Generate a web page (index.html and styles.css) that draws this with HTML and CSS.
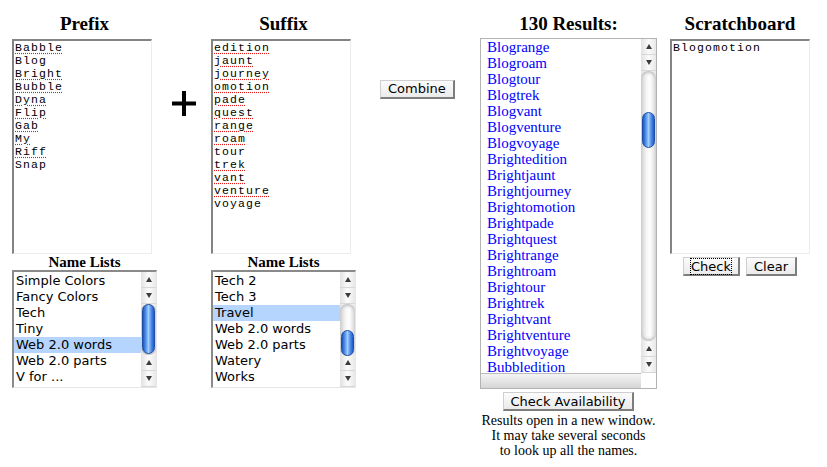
FILE: index.html
```html
<!DOCTYPE html>
<html>
  <head>
    <meta charset="UTF-8">
    <title>Name Combiner</title>
    <link rel="stylesheet" href="styles.css">
  </head>
  <body>
    <div class="page">
      <div class="list-col">
        <h2 class="heading">Prefix</h2>
        <div class="textbox">
          <div><span class="typo">Babble</span></div>
          <div>Blog</div>
          <div><span class="typo">Bright</span></div>
          <div><span class="typo">Bubble</span></div>
          <div><span class="typo">Dyna</span></div>
          <div><span class="typo">Flip</span></div>
          <div><span class="typo">Gab</span></div>
          <div><span class="typo">My</span></div>
          <div><span class="typo">Riff</span></div>
          <div>Snap</div>
        </div>
        <h3 class="subheading">Name Lists</h3>
        <div class="listbox">
          <ul class="options">
            <li>Simple Colors</li>
            <li>Fancy Colors</li>
            <li>Tech</li>
            <li>Tiny</li>
            <li class="selected">Web 2.0 words</li>
            <li>Web 2.0 parts</li>
            <li>V for ...</li>
          </ul>
          <div class="vbar">
            <span class="arrow up"></span>
            <span class="arrow down"></span>
            <div class="track"><div class="thumb thumb-prefix"></div></div>
            <span class="arrow up"></span>
            <span class="arrow down"></span>
          </div>
        </div>
      </div>

      <div class="plus-col">
        <svg width="24" height="25" viewBox="0 0 24 25">
          <rect x="10" y="0" width="4" height="25" fill="#000"/>
          <rect x="0" y="10.5" width="24" height="4" fill="#000"/>
        </svg>
      </div>

      <div class="list-col">
        <h2 class="heading">Suffix</h2>
        <div class="textbox">
          <div><span class="typo">edition</span></div>
          <div><span class="typo">jaunt</span></div>
          <div><span class="typo">journey</span></div>
          <div><span class="typo">omotion</span></div>
          <div><span class="typo">pade</span></div>
          <div><span class="typo">quest</span></div>
          <div><span class="typo">range</span></div>
          <div><span class="typo">roam</span></div>
          <div>tour</div>
          <div><span class="typo">trek</span></div>
          <div><span class="typo">vant</span></div>
          <div><span class="typo">venture</span></div>
          <div>voyage</div>
        </div>
        <h3 class="subheading">Name Lists</h3>
        <div class="listbox">
          <ul class="options">
            <li>Tech 2</li>
            <li>Tech 3</li>
            <li class="selected">Travel</li>
            <li>Web 2.0 words</li>
            <li>Web 2.0 parts</li>
            <li>Watery</li>
            <li>Works</li>
          </ul>
          <div class="vbar">
            <span class="arrow up"></span>
            <span class="arrow down"></span>
            <div class="track"><div class="thumb thumb-suffix"></div></div>
            <span class="arrow up"></span>
            <span class="arrow down"></span>
          </div>
        </div>
      </div>

      <div class="combine-col">
        <button class="btn" type="button">Combine</button>
      </div>

      <div class="results-col">
        <h2 class="heading results-heading">130 Results:</h2>
        <div class="results">
          <ul class="result-items">
            <li>Blogrange</li>
            <li>Blogroam</li>
            <li>Blogtour</li>
            <li>Blogtrek</li>
            <li>Blogvant</li>
            <li>Blogventure</li>
            <li>Blogvoyage</li>
            <li>Brightedition</li>
            <li>Brightjaunt</li>
            <li>Brightjourney</li>
            <li>Brightomotion</li>
            <li>Brightpade</li>
            <li>Brightquest</li>
            <li>Brightrange</li>
            <li>Brightroam</li>
            <li>Brightour</li>
            <li>Brightrek</li>
            <li>Brightvant</li>
            <li>Brightventure</li>
            <li>Brightvoyage</li>
            <li>Bubbledition</li>
          </ul>
          <div class="vbar">
            <span class="arrow up"></span>
            <span class="arrow down"></span>
            <div class="track"><div class="thumb thumb-results"></div></div>
            <span class="arrow up"></span>
            <span class="arrow down"></span>
          </div>
          <div class="hbar"></div>
          <div class="corner"></div>
        </div>
        <button class="btn avail" type="button">Check Availability</button>
        <p class="note">Results open in a new window.<br>It may take several seconds<br>to look up all the names.</p>
      </div>

      <div class="scratch-col">
        <h2 class="heading">Scratchboard</h2>
        <div class="textbox">
          <div>Blogomotion</div>
        </div>
        <div class="scratch-buttons">
          <button class="btn" type="button"><span class="focus">Check</span></button>
          <button class="btn" type="button">Clear</button>
        </div>
      </div>
    </div>
  </body>
</html>
```

FILE: styles.css
```css
body {
  margin: 0;
  background-color: #fff;
  color: #000;
  font-family: "Liberation Serif", serif;
}

.page {
  display: flex;
  align-items: flex-start;
  padding: 13px 0 0 12px;
}

.heading {
  margin: 0 0 4px;
  font-size: 19px;
  line-height: 22px;
  font-weight: bold;
  text-align: center;
}

.subheading {
  margin: 0;
  font-size: 15px;
  line-height: 16px;
  font-weight: bold;
  text-align: center;
}

/* columns */

.list-col {
  width: 145px;
  display: flex;
  flex-direction: column;
}

.plus-col {
  width: 54px;
  display: flex;
  justify-content: center;
  padding-top: 78px;
}

.combine-col {
  width: 124px;
  box-sizing: border-box;
  padding: 66px 0 0 24px;
}

.results-col {
  width: 177px;
  display: flex;
  flex-direction: column;
  align-items: center;
}

.scratch-col {
  width: 140px;
  margin-left: 13px;
  display: flex;
  flex-direction: column;
  align-items: center;
}

/* text areas */

.textbox {
  box-sizing: border-box;
  width: 140px;
  height: 215px;
  padding: 0 0 0 1px;
  border-style: solid;
  border-width: 2px 1px 1px 2px;
  border-color: #848484 #ececec #ececec #848484;
  font: 11.5px/13px "Liberation Mono", monospace;
  letter-spacing: 1.1px;
}

.typo {
  text-decoration: underline dotted #e41b1b;
  text-underline-offset: 2px;
}

/* list boxes */

.listbox {
  box-sizing: border-box;
  width: 145px;
  height: 118px;
  display: flex;
  border-style: solid;
  border-width: 2px 1px 1px 2px;
  border-color: #8a8a8a #e6e6e6 #e6e6e6 #8a8a8a;
}

.options {
  flex: 1;
  list-style: none;
  margin: 0;
  padding: 1px 0 0;
  overflow: hidden;
  font: 13px/16px "DejaVu Sans", sans-serif;
}

.options li {
  padding-left: 2px;
  white-space: nowrap;
}

.options .selected {
  background-color: #b5d5ff;
}

/* scroll bars */

.vbar {
  width: 15px;
  display: flex;
  flex-direction: column;
  background: linear-gradient(to right, #e2e2e2, #fbfbfb 50%, #e8e8e8);
}

.arrow {
  height: 16px;
  box-sizing: border-box;
  display: flex;
  align-items: center;
  justify-content: center;
  border-bottom: 1px solid #d8d8d8;
}

.arrow::after {
  content: "";
  border-left: 3px solid transparent;
  border-right: 3px solid transparent;
}

.arrow.up::after {
  border-bottom: 5px solid #3c3c3c;
}

.arrow.down::after {
  border-top: 5px solid #3c3c3c;
}

.track {
  flex: 1;
  display: flex;
  flex-direction: column;
  border-radius: 7px;
  background: linear-gradient(to right, #cfcfcf, #f4f4f4 35%, #ffffff 60%, #d6d6d6);
  box-shadow: inset 0 3px 3px -1px #c2c2c2, inset 0 -3px 3px -1px #c2c2c2;
}

.thumb {
  margin: 0 1px;
  border: 1px solid #1f4ea6;
  border-radius: 7px;
  background: linear-gradient(to right, #1b55c4, #5c9cef 30%, #a3cdfb 50%, #4f8ce8 75%, #1c58cf);
}

.thumb-prefix {
  height: 48px;
}

.thumb-suffix {
  height: 24px;
  margin-top: 26px;
}

.thumb-results {
  height: 34px;
  margin-top: 41px;
}

/* results */

.results-heading {
  margin-bottom: 3px;
}

.results {
  box-sizing: border-box;
  width: 177px;
  height: 351px;
  border: 1px solid #b4b4b4;
  display: grid;
  grid-template-columns: 1fr 15px;
  grid-template-rows: 1fr 15px;
}

.result-items {
  list-style: none;
  margin: 0;
  padding: 0 0 0 6px;
  overflow: hidden;
  font: 15px/16px "Liberation Serif", serif;
  color: #0000ff;
}

.hbar {
  border-top: 1px solid #bcbcbc;
  background: linear-gradient(#f4f4f4, #d6d6d6);
}

.corner {
  background-color: #fff;
}

.note {
  margin: 2px 0 0;
  font-size: 14px;
  line-height: 15px;
  text-align: center;
}

/* buttons */

.btn {
  box-sizing: border-box;
  height: 19px;
  padding: 0 7px;
  font: 13px/15px "DejaVu Sans", sans-serif;
  color: #000;
  background: linear-gradient(#fbfbfb, #ebebeb);
  border-style: solid;
  border-width: 1px 2px 2px 1px;
  border-color: #cfcfcf #7d7d7d #7d7d7d #cfcfcf;
  border-radius: 0;
  cursor: pointer;
}

.avail {
  margin-top: 3px;
}

.scratch-buttons {
  display: flex;
  gap: 6px;
  margin-top: 3px;
}

.focus {
  outline: 1px dotted #000;
}
```
